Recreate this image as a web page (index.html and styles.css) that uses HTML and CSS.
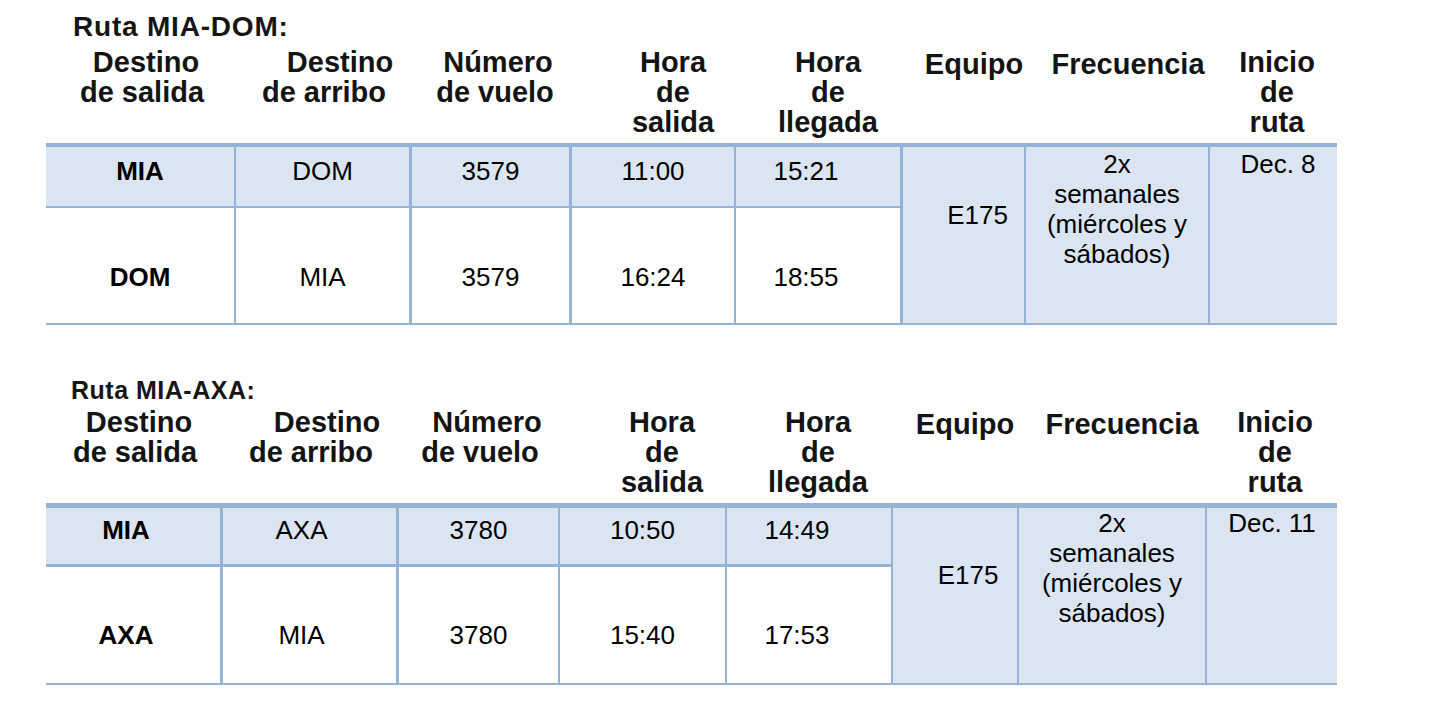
FILE: index.html
```html
<!DOCTYPE html>
<html lang="es">
<head>
<meta charset="utf-8">
<title>Rutas</title>
<link rel="stylesheet" href="styles.css">
</head>
<body>
<section class="route r1">
  <h2 class="title">Ruta MIA-DOM:</h2>
  <div class="head">
    <div class="h c1"><span class="d1">Destino</span><br>de salida</div>
    <div class="h c2"><span class="d2">Destino</span><br>de arribo</div>
    <div class="h c3"><span class="d3">Número</span><br>de vuelo</div>
    <div class="h c4">Hora<br>de<br>salida</div>
    <div class="h c5">Hora<br>de<br>llegada</div>
    <div class="h c6">Equipo</div>
    <div class="h c7">Frecuencia</div>
    <div class="h c8">Inicio<br>de<br>ruta</div>
  </div>
  <div class="grid">
    <div class="cell row1 c1 b">MIA</div>
    <div class="cell row1 c2">DOM</div>
    <div class="cell row1 c3">3579</div>
    <div class="cell row1 c4">11:00</div>
    <div class="cell row1 c5">15:21</div>
    <div class="cell span c6 eq">E175</div>
    <div class="cell span c7 freq">2x<br>semanales<br>(miércoles y<br>sábados)</div>
    <div class="cell span c8 start">Dec. 8</div>
    <div class="cell row2 c1 b">DOM</div>
    <div class="cell row2 c2">MIA</div>
    <div class="cell row2 c3">3579</div>
    <div class="cell row2 c4">16:24</div>
    <div class="cell row2 c5">18:55</div>
  </div>
</section>

<section class="route r2">
  <h2 class="title">Ruta MIA-AXA:</h2>
  <div class="head">
    <div class="h c1"><span class="d1">Destino</span><br>de salida</div>
    <div class="h c2"><span class="d2">Destino</span><br>de arribo</div>
    <div class="h c3"><span class="d3">Número</span><br>de vuelo</div>
    <div class="h c4">Hora<br>de<br>salida</div>
    <div class="h c5">Hora<br>de<br>llegada</div>
    <div class="h c6">Equipo</div>
    <div class="h c7">Frecuencia</div>
    <div class="h c8">Inicio<br>de<br>ruta</div>
  </div>
  <div class="grid">
    <div class="cell row1 c1 b">MIA</div>
    <div class="cell row1 c2">AXA</div>
    <div class="cell row1 c3">3780</div>
    <div class="cell row1 c4">10:50</div>
    <div class="cell row1 c5">14:49</div>
    <div class="cell span c6 eq">E175</div>
    <div class="cell span c7 freq">2x<br>semanales<br>(miércoles y<br>sábados)</div>
    <div class="cell span c8 start">Dec. 11</div>
    <div class="cell row2 c1 b">AXA</div>
    <div class="cell row2 c2">MIA</div>
    <div class="cell row2 c3">3780</div>
    <div class="cell row2 c4">15:40</div>
    <div class="cell row2 c5">17:53</div>
  </div>
</section>
</body>
</html>
```

FILE: styles.css
```css
html, body {
  background: #ffffff;
}

body {
  margin: 0;
  padding-top: 12px;
  font-family: "Liberation Sans", Arial, Helvetica, sans-serif;
  color: #000000;
}

.route {
  margin-left: 46px;
  width: 1291px;
}

.r2 {
  margin-top: 51px;
}

.title {
  margin: 0;
  font-weight: bold;
  color: #161616;
}

.r1 .title {
  font-size: 28px;
  line-height: 30px;
  letter-spacing: 0.8px;
  padding-left: 27px;
  margin-bottom: 5px;
}

.r2 .title {
  font-size: 25px;
  line-height: 28px;
  letter-spacing: 0.5px;
  padding-left: 25px;
  margin-bottom: 3px;
}

/* shared column templates */
.r1 .head,
.r1 .grid {
  grid-template-columns: 188px 175px 160px 165px 166px 124px 184px 129px;
}

.r2 .head,
.r2 .grid {
  grid-template-columns: 174px 176px 162px 167px 166px 126px 188px 132px;
}

.c1 { grid-column: 1; }
.c2 { grid-column: 2; }
.c3 { grid-column: 3; }
.c4 { grid-column: 4; }
.c5 { grid-column: 5; }
.c6 { grid-column: 6; }
.c7 { grid-column: 7; }
.c8 { grid-column: 8; }

/* header */
.head {
  display: grid;
  font-size: 29px;
  line-height: 30px;
  font-weight: bold;
  color: #141414;
  text-align: center;
  padding-bottom: 6px;
}

.h {
  box-sizing: border-box;
  white-space: nowrap;
}

.h.c6,
.h.c7 {
  padding-top: 2px;
}

.d1 { padding-left: 8px; }
.d2 { padding-left: 32px; }

.r1 .d3 { padding-left: 6px; }
.r2 .d3 { padding-left: 14px; }

.r1 .h.c1 { padding-left: 4px; }
.r1 .h.c2 { padding-left: 5px; }
.r1 .h.c3 { padding-left: 12px; }
.r1 .h.c4 { padding-left: 43px; }
.r1 .h.c5 { padding-left: 22px; }
.r1 .h.c6 { padding-left: 24px; }
.r1 .h.c7 { padding-left: 24px; }
.r1 .h.c8 { padding-left: 9px; }

.r2 .h.c1 { padding-left: 4px; }
.r2 .h.c2 { padding-left: 6px; }
.r2 .h.c3 { padding-left: 6px; }
.r2 .h.c4 { padding-left: 41px; }
.r2 .h.c5 { padding-left: 20px; }
.r2 .h.c6 { padding-left: 22px; }
.r2 .h.c7 { padding-left: 22px; }
.r2 .h.c8 { padding-left: 8px; }

/* body grid */
.grid {
  display: grid;
  border-top: 4px solid #95b3d7;
  border-bottom: 2px solid #95b3d7;
  grid-template-rows: 59px 117px;
}

.r2 .grid {
  border-top-width: 5px;
  grid-template-rows: 56px 119px;
}

.cell {
  box-sizing: border-box;
  font-size: 26px;
  line-height: 30px;
  text-align: center;
  white-space: nowrap;
  border-left: 0 solid #95b3d7;
}

.b {
  font-weight: bold;
}

.row1 {
  grid-row: 1;
  background: #dbe5f1;
  padding-top: 9px;
}

.row2 {
  grid-row: 2;
  background: #ffffff;
  border-top: 2px solid #95b3d7;
  padding-top: 54px;
}

.span {
  grid-row: 1 / span 2;
  background: #dbe5f1;
}

.eq { padding-top: 53px; }
.freq, .start { padding-top: 2px; }

.r2 .row1 { padding-top: 7px; }
.r2 .row2 { border-top-width: 3px; padding-top: 53px; }
.r2 .eq { padding-top: 52px; }
.r2 .freq, .r2 .start { padding-top: 0; }

/* vertical rules */
.r1 .cell.c2 { border-left-width: 2px; }
.r1 .cell.c3 { border-left-width: 3px; }
.r1 .cell.c4 { border-left-width: 3px; }
.r1 .cell.c5 { border-left-width: 2px; }
.r1 .cell.c6 { border-left-width: 3px; }
.r1 .cell.c7 { border-left-width: 2px; }
.r1 .cell.c8 { border-left-width: 2px; }

.r2 .cell.c2 { border-left-width: 3px; }
.r2 .cell.c3 { border-left-width: 3px; }
.r2 .cell.c4 { border-left-width: 2px; }
.r2 .cell.c5 { border-left-width: 2px; }
.r2 .cell.c6 { border-left-width: 2px; }
.r2 .cell.c7 { border-left-width: 2px; }
.r2 .cell.c8 { border-left-width: 2px; }

/* horizontal text offsets within cells */
.r1 .cell.c5 { padding-right: 24px; }
.r1 .cell.c6 { padding-left: 28px; }
.r1 .cell.c8 { padding-left: 9px; }

.r2 .cell.c1 { padding-right: 14px; }
.r2 .cell.c2 { padding-right: 16px; }
.r2 .cell.c5 { padding-right: 24px; }
.r2 .cell.c6 { padding-left: 26px; }
```
